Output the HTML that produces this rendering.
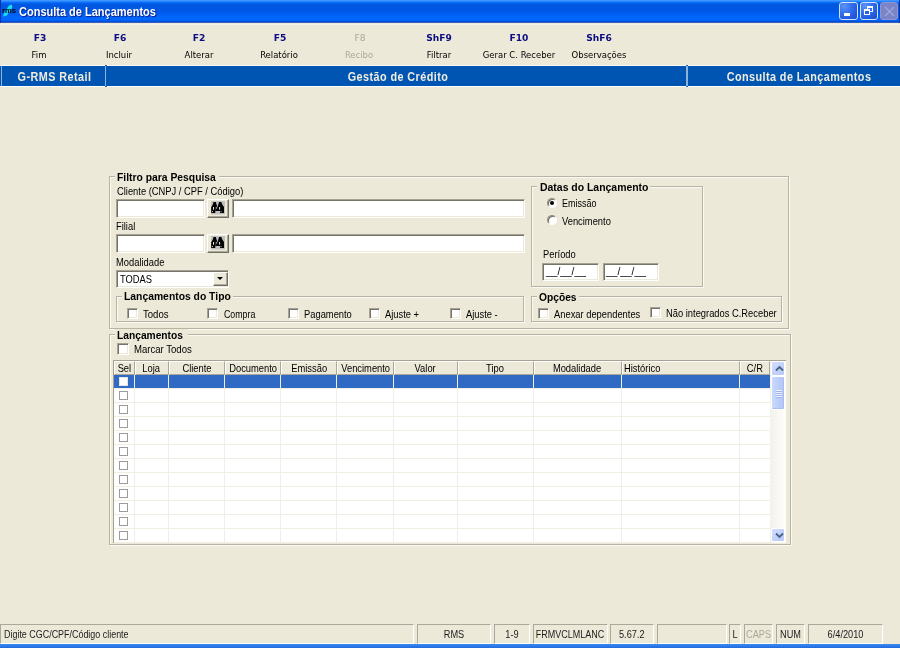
<!DOCTYPE html>
<html><head><meta charset="utf-8"><title>Consulta de Lançamentos</title>
<style>
*{box-sizing:border-box;margin:0;padding:0}
html,body{width:900px;height:648px;overflow:hidden;background:#ECE9D8}
body{position:relative;font-family:"Liberation Sans",sans-serif;font-size:11px;color:#000;line-height:13px}
div,span,svg{position:absolute;white-space:nowrap}
#w{left:0;top:0;width:900px;height:648px;will-change:transform}
.t{transform:scaleX(.85);transform-origin:0 0}
.t.x{transform-origin:50% 0}
#title{left:0;top:0;width:900px;height:23px;background:linear-gradient(to bottom,#3E96FF 0.5px,#2484FF 1.5px,#0A6EF8 2.5px,#0360EC 3.5px,#0058E2 4.5px,#0057E0 6.5px,#0058E4 9.5px,#005AEA 12.5px,#005FF4 14.5px,#0066FC 16.5px,#0068FF 19px,#0061F4 20.5px,#0350DC 21.3px,#0340C0 22px,#0340C0 22.3px,#8393C5 22.8px,#C9CCD0 23px)}
#title .tt{left:19.3px;top:4.6px;font:bold 12.5px/15px "Liberation Sans",sans-serif;color:#fff;text-shadow:1px 1px 1px #0A1883;transform:scaleX(.88);transform-origin:0 0}
.wb{top:2px;width:19px;height:18px;border:1px solid #D5E0FA;border-radius:3px;background:radial-gradient(circle at 25% 20%,#5B93F7 0%,#3470EC 40%,#2258DC 75%,#1C4CC8 100%)}
.wb.dis{background:#7B84C6;border-color:#8C96D2}
.tk{top:31.7px;width:80px;text-align:center;font:bold 9.5px/12px "DejaVu Sans",sans-serif;color:#0C0C84;transform:scaleX(.96)}
.tl{top:48.5px;width:90px;text-align:center;font:9.5px/12px "DejaVu Sans Condensed","DejaVu Sans",sans-serif;color:#000;transform:scaleX(.99)}
.dis2,.dis2 span{color:#ACA899 !important}
#bar{left:0;top:65px;width:900px;height:22px;background:#0055B2;border-bottom:1px solid #fff;border-top:1px solid #FAF9F5}
#bar span{top:3.5px;font:bold 12.5px/14px "Liberation Sans",sans-serif;color:#F0EDDE;text-align:center;letter-spacing:.5px;transform:scaleX(.866)}
.sep{top:0;width:1.2px;height:20px;background:#8DB2DC}
.gb{border:1px solid #B7B4A4;box-shadow:1px 1px 0 #FAF9F4, inset 1px 1px 0 #FAF9F4}
.gl{background:#ECE9D8;font:bold 11px/13px "Liberation Sans",sans-serif;height:13px}
.gl span{position:static;display:inline-block;transform:scaleX(.93);transform-origin:0 0}
.in{background:#fff;border:1px solid;border-color:#A5A294 #fff #fff #A5A294;box-shadow:inset 1px 1px 0 #76746A, inset -1px -1px 0 #ECE9D8}
.btn{background:#ECE9D8;border:1px solid;border-color:#fff #716F64 #716F64 #fff;box-shadow:inset -1px -1px 0 #ACA899}
.cb{width:11.4px;height:11.4px;background:#fff;border:1px solid;border-color:#A5A294 #fff #fff #A5A294;box-shadow:inset 1px 1px 0 #76746A, inset -1px -1px 0 #ECE9D8}
.rb{width:10px;height:10px;border-radius:50%;background:#fff;border:1px solid;border-color:#8E8C7E #fff #fff #8E8C7E;box-shadow:inset 1px 1px 0 #6E6C62}
.sp{top:624px;height:20px;border:1px solid;border-color:#ACA899 #fff #fff #ACA899;font:10px/19px "Liberation Sans",sans-serif}
.sp span{left:0;top:0;width:100%;text-align:center;transform:scaleX(.92);color:#1c1c1c}
#grid{left:114px;top:361px;width:672px;height:182px;background:#fff;overflow:hidden}
#gridb{left:113px;top:360px;width:673px;height:183px;background:#A5A294}
.hc{top:0;height:13.6px;background:#ECE9D8;border:1px solid;border-color:#fff #ACA899 #ACA899 #fff}
.hc span{top:0px;line-height:12px}
.gr{left:0;width:656px;border-bottom:1px solid #F1EFE4}
.gr.sel{background:#316AC5}
.gc{left:5px;top:2px;width:9px;height:9px;background:#fff;border:1px solid #9C9C9C}
.sel .gc{border-color:#E4E4E4}
.vl{top:13.6px;width:1px;height:169px;background:#F1EFE4;mix-blend-mode:normal}
.sbb{left:.7px;width:14.6px;height:14.5px;border:1px solid #fff;border-radius:2px;background:linear-gradient(135deg,#D0DDFC,#B6C9F8)}
.sbb svg{left:3px;top:3px}
.sbt{left:.7px;width:14.6px;border:1px solid #fff;border-radius:2px;background:linear-gradient(to right,#CADAFD,#BACCFA 60%,#B4C6F6);box-shadow:inset -1px -1px 0 #A9BDF2}
.sbt i{position:absolute;left:4px;width:6px;height:1px;background:#EEF4FE;box-shadow:0 1px 0 #9DB4EC}
</style></head><body>
<div id="w">

<div id="title">
<div style="left:0;top:0;width:1px;height:23px;background:#0831A8"></div><div style="left:898.5px;top:0;width:1.5px;height:23px;background:#0831A8"></div>
<span class="tt">Consulta de Lançamentos</span>
<svg style="left:2px;top:4px" width="15" height="13" viewBox="0 0 15 13"><path d="M7 1.5 C9.5 -0.5 11.5 1.5 9.5 5 L4.8 11.5 L1 12.5 L2.2 9 Z" fill="#19E0F0"/><text x="0" y="8.5" font-family="Liberation Sans,sans-serif" font-weight="bold" font-size="6.5" fill="#0a0a14" textLength="14" lengthAdjust="spacingAndGlyphs">rms</text></svg>
<div class="wb" style="left:839px"><div style="left:4px;top:10px;width:6px;height:3px;background:#fff"></div></div>
<div class="wb" style="left:860px;width:18px"><div style="left:6px;top:3px;width:6px;height:6px;border:1px solid #fff;border-top-width:2px"></div><div style="left:3px;top:6px;width:6px;height:6px;border:1px solid #fff;border-top-width:2px;background:#2A64DD"></div></div>
<div class="wb dis" style="left:880px;width:18px"><svg style="left:2.5px;top:3px" width="11" height="11" viewBox="0 0 11 11"><path d="M1 1 L10 10 M10 1 L1 10" stroke="#9BA3DB" stroke-width="1.6"/></svg></div>
</div>

<div style="left:0;top:23.5px;width:900px;height:1.5px;background:#F5F3E9"></div>
<span class="tk" style="left:0px">F3</span><span class="tl" style="left:-6px">Fim</span>
<span class="tk" style="left:80px">F6</span><span class="tl" style="left:74px">Incluir</span>
<span class="tk" style="left:159px">F2</span><span class="tl" style="left:154px">Alterar</span>
<span class="tk" style="left:240px">F5</span><span class="tl" style="left:234px">Relatório</span>
<span class="tk dis2" style="left:320px;font-weight:normal">F8</span><span class="tl dis2" style="left:314px">Recibo</span>
<span class="tk" style="left:399px">ShF9</span><span class="tl" style="left:394px">Filtrar</span>
<span class="tk" style="left:479px">F10</span><span class="tl" style="left:474px">Gerar C. Receber</span>
<span class="tk" style="left:559px">ShF6</span><span class="tl" style="left:554px">Observações</span>

<div id="bar">
<div class="sep" style="left:.5px"></div>
<span style="left:0;width:109px">G-RMS Retail</span>
<div class="sep" style="left:105.3px"></div><div style="left:104.9px;top:-1px;width:2px;height:1.4px;background:#0055B2;border-radius:1px"></div><div style="left:104.9px;top:19.6px;width:2px;height:1.4px;background:#0055B2;border-radius:1px"></div>
<span style="left:107px;width:582px">Gestão de Crédito</span>
<div class="sep" style="left:686.4px"></div><div style="left:686px;top:-1px;width:2px;height:1.4px;background:#0055B2;border-radius:1px"></div><div style="left:686px;top:19.6px;width:2px;height:1.4px;background:#0055B2;border-radius:1px"></div>
<span style="left:693px;width:212px">Consulta de Lançamentos</span>
</div>

<!-- Filtro para Pesquisa -->
<div class="gb" style="left:109px;top:176px;width:680px;height:153px"></div>
<div class="gl" style="left:115px;top:171px;width:104px;padding-left:2.4px"><span style="transform:scaleX(.94)">Filtro para Pesquisa</span></div>
<span class="t" style="left:116.5px;top:185px">Cliente (CNPJ / CPF / Código)</span>
<div class="in" style="left:116px;top:199px;width:89px;height:19px"></div>
<div class="btn" style="left:207px;top:199px;width:22px;height:19px"><svg style="left:3px;top:1px" width="14" height="13.5" viewBox="0 0 14 13.5"><rect x="0" y="0" width="14" height="13.5" fill="#C0C0C0"/>
<path d="M2.5 1H4.9L5.5 3.5L6.3 5V6H4.3V12H0.2V6L1 5L2 3Z" fill="#000"/>
<path d="M8 1H10.4L11 3L12.3 5L13 6V12H9V10H4.3V6H6.9L7.2 4Z" fill="#000"/>
<rect x="5.1" y="5.8" width="1.1" height="2" fill="#999"/>
<rect x="2" y="6" width=".9" height="2.7" fill="#fff"/><rect x="8.2" y="6" width=".9" height="2.7" fill="#fff"/>
<rect x="1.1" y="10.2" width=".9" height=".9" fill="#fff"/><rect x="9.6" y="10.2" width=".9" height=".9" fill="#fff"/></svg></div>
<div class="in" style="left:232px;top:199px;width:293px;height:19px"></div>
<span class="t" style="left:116px;top:220px">Filial</span>
<div class="in" style="left:116px;top:234px;width:89px;height:19px"></div>
<div class="btn" style="left:207px;top:234px;width:22px;height:19px"><svg style="left:3px;top:1px" width="14" height="13.5" viewBox="0 0 14 13.5"><rect x="0" y="0" width="14" height="13.5" fill="#C0C0C0"/>
<path d="M2.5 1H4.9L5.5 3.5L6.3 5V6H4.3V12H0.2V6L1 5L2 3Z" fill="#000"/>
<path d="M8 1H10.4L11 3L12.3 5L13 6V12H9V10H4.3V6H6.9L7.2 4Z" fill="#000"/>
<rect x="5.1" y="5.8" width="1.1" height="2" fill="#999"/>
<rect x="2" y="6" width=".9" height="2.7" fill="#fff"/><rect x="8.2" y="6" width=".9" height="2.7" fill="#fff"/>
<rect x="1.1" y="10.2" width=".9" height=".9" fill="#fff"/><rect x="9.6" y="10.2" width=".9" height=".9" fill="#fff"/></svg></div>
<div class="in" style="left:232px;top:234px;width:293px;height:19px"></div>
<span class="t" style="left:116px;top:255.5px">Modalidade</span>
<div class="in" style="left:116px;top:270px;width:113px;height:17.5px"><span class="t" style="left:3px;top:2px">TODAS</span>
<div class="btn" style="left:96px;top:1px;width:15px;height:14px"><div style="left:3.2px;top:4px;border:3px solid transparent;border-top:3px solid #000;border-bottom:0"></div></div></div>

<div class="gb" style="left:116px;top:296px;width:408px;height:26px"></div>
<div class="gl" style="left:121.5px;top:290px;width:111px;padding-left:2.5px"><span style="transform:scaleX(.941)">Lançamentos do Tipo</span></div>
<div class="cb" style="left:126.6px;top:307.8px"></div><span class="t" style="left:143.4px;top:308px;transform:scaleX(.87)">Todos</span>
<div class="cb" style="left:206.6px;top:307.8px"></div><span class="t" style="left:223.8px;top:308px;transform:scaleX(.8)">Compra</span>
<div class="cb" style="left:287.6px;top:307.8px"></div><span class="t" style="left:304px;top:308px">Pagamento</span>
<div class="cb" style="left:368.6px;top:307.8px"></div><span class="t" style="left:385px;top:308px">Ajuste +</span>
<div class="cb" style="left:449.6px;top:307.8px"></div><span class="t" style="left:466px;top:308px">Ajuste -</span>

<div class="gb" style="left:531px;top:186px;width:172px;height:100.5px"></div>
<div class="gl" style="left:537px;top:180.5px;width:113px;padding-left:2.5px"><span style="transform:scaleX(.949)">Datas do Lançamento</span></div>
<div class="rb" style="left:547px;top:198px"><div style="left:2px;top:2px;width:4px;height:4px;border-radius:50%;background:#000"></div></div><span class="t" style="left:562px;top:197px;transform:scaleX(.815)">Emissão</span>
<div class="rb" style="left:547px;top:215px"></div><span class="t" style="left:562px;top:214.5px">Vencimento</span>
<span class="t" style="left:542.5px;top:248px">Período</span>
<div class="in" style="left:542px;top:263px;width:56.5px;height:18px"><span class="t" style="left:2.5px;top:1px;transform:scaleX(.93)">__/__/__</span></div>
<div class="in" style="left:602.5px;top:263px;width:56.5px;height:18px"><span class="t" style="left:2.5px;top:1px;transform:scaleX(.93)">__/__/__</span></div>

<div class="gb" style="left:531px;top:296px;width:251px;height:26px"></div>
<div class="gl" style="left:537px;top:290.7px;width:42px;padding-left:2.3px"><span>Opções</span></div>
<div class="cb" style="left:538px;top:308px"></div><span class="t" style="left:554px;top:308px">Anexar dependentes</span>
<div class="cb" style="left:650px;top:307px"></div><span class="t" style="left:666px;top:307px">Não integrados C.Receber</span>

<!-- Lançamentos -->
<div class="gb" style="left:109px;top:333.7px;width:682px;height:211.3px"></div>
<div class="gl" style="left:115px;top:329px;width:73px;padding-left:2px"><span>Lançamentos</span></div>
<div class="cb" style="left:117.2px;top:343.2px"></div><span class="t" style="left:134px;top:343px;transform:scaleX(.87)">Marcar Todos</span>

<div id="gridb"></div>
<div id="grid">
<div class="hc" style="left:0px;width:20.8px"><span class="t" style="left:-1.5px;width:20.8px;text-align:center;transform-origin:50% 0">Sel</span></div>
<div class="hc" style="left:20.8px;width:34.2px"><span class="t" style="left:-1.5px;width:34.2px;text-align:center;transform-origin:50% 0">Loja</span></div>
<div class="hc" style="left:55px;width:56px"><span class="t" style="left:-1.5px;width:56px;text-align:center;transform-origin:50% 0">Cliente</span></div>
<div class="hc" style="left:111px;width:56px"><span class="t" style="left:-1.5px;width:56px;text-align:center;transform-origin:50% 0">Documento</span></div>
<div class="hc" style="left:167px;width:56.4px"><span class="t" style="left:-1.5px;width:56.4px;text-align:center;transform-origin:50% 0">Emissão</span></div>
<div class="hc" style="left:223.4px;width:56.2px"><span class="t" style="left:-1.5px;width:56.2px;text-align:center;transform-origin:50% 0">Vencimento</span></div>
<div class="hc" style="left:279.6px;width:64.3px"><span class="t" style="left:-1.5px;width:64.3px;text-align:center;transform-origin:50% 0">Valor</span></div>
<div class="hc" style="left:343.9px;width:75.9px"><span class="t" style="left:-1.5px;width:75.9px;text-align:center;transform-origin:50% 0">Tipo</span></div>
<div class="hc" style="left:419.8px;width:88.1px"><span class="t" style="left:-1.5px;width:88.1px;text-align:center;transform-origin:50% 0">Modalidade</span></div>
<div class="hc" style="left:507.9px;width:117.7px"><span class="t" style="left:1.6px;transform-origin:0 0">Histórico</span></div>
<div class="hc" style="left:625.6px;width:30.9px"><span class="t" style="right:6.5px;transform-origin:100% 0">C/R</span></div>
<div class="gr sel" style="top:13.6px;height:14.07px"><div class="gc"></div></div>
<div class="gr" style="top:27.67px;height:14.07px"><div class="gc"></div></div>
<div class="gr" style="top:41.74px;height:14.07px"><div class="gc"></div></div>
<div class="gr" style="top:55.81px;height:14.07px"><div class="gc"></div></div>
<div class="gr" style="top:69.88px;height:14.07px"><div class="gc"></div></div>
<div class="gr" style="top:83.95px;height:14.07px"><div class="gc"></div></div>
<div class="gr" style="top:98.02px;height:14.07px"><div class="gc"></div></div>
<div class="gr" style="top:112.09px;height:14.07px"><div class="gc"></div></div>
<div class="gr" style="top:126.16px;height:14.07px"><div class="gc"></div></div>
<div class="gr" style="top:140.23px;height:14.07px"><div class="gc"></div></div>
<div class="gr" style="top:154.3px;height:14.07px"><div class="gc"></div></div>
<div class="gr" style="top:168.37px;height:14.07px"><div class="gc"></div></div>
<div class="vl" style="left:19.8px"></div>
<div class="vl" style="left:54px"></div>
<div class="vl" style="left:110px"></div>
<div class="vl" style="left:166px"></div>
<div class="vl" style="left:222.4px"></div>
<div class="vl" style="left:278.6px"></div>
<div class="vl" style="left:342.9px"></div>
<div class="vl" style="left:418.8px"></div>
<div class="vl" style="left:506.9px"></div>
<div class="vl" style="left:624.6px"></div>
<div id="sb" style="left:656px;top:0;width:15.5px;height:183px;background:linear-gradient(to right,#F3F1EC,#FEFEFB)">
<div class="sbb" style="top:0px"><svg width="9" height="7" viewBox="0 0 9 7"><path d="M1 5.5 L4.5 2 L8 5.5" fill="none" stroke="#4D6185" stroke-width="1.8"/></svg></div>
<div class="sbt" style="top:15px;height:34px"><i style="top:13px"></i><i style="top:15px"></i><i style="top:17px"></i><i style="top:19px"></i></div>
<div class="sbb" style="top:166.5px"><svg width="9" height="7" viewBox="0 0 9 7"><path d="M1 1.5 L4.5 5 L8 1.5" fill="none" stroke="#4D6185" stroke-width="1.8"/></svg></div>
</div>
</div>

<!-- status -->
<div class="sp" style="left:0;width:414px"><span style="text-align:left;transform-origin:0 0;left:3px;transform:scaleX(.893)">Digite CGC/CPF/Código cliente</span></div>
<div class="sp" style="left:417px;width:74px"><span>RMS</span></div>
<div class="sp" style="left:494px;width:36px"><span>1-9</span></div>
<div class="sp" style="left:533px;width:75px"><span style="left:-2.5px;transform:scaleX(.9)">FRMVCLMLANC</span></div>
<div class="sp" style="left:610px;width:44px"><span style="text-align:left;transform-origin:0 0;left:8px">5.67.2</span></div>
<div class="sp" style="left:657px;width:70px"><span></span></div>
<div class="sp" style="left:729px;width:12px"><span>L</span></div>
<div class="sp dis2" style="left:744px;width:29px"><span>CAPS</span></div>
<div class="sp" style="left:776px;width:29px"><span>NUM</span></div>
<div class="sp" style="left:808px;width:75px"><span>6/4/2010</span></div>
<div style="left:0;top:644px;width:900px;height:4px;background:linear-gradient(#3D8BF0,#1E6BE0)"></div>


</div>
</body></html>
